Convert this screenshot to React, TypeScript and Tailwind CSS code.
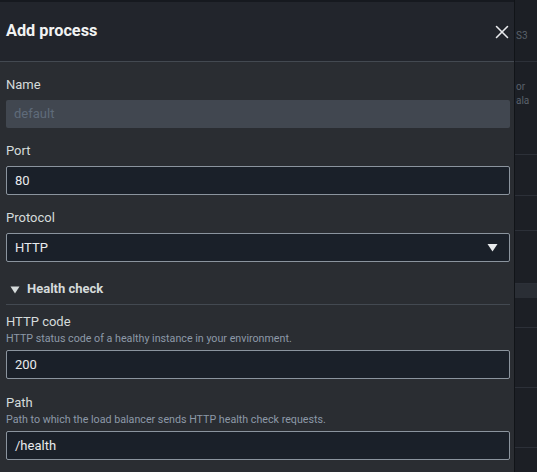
import { X } from "lucide-react";

const font = { fontFamily: "Roboto, 'Noto Sans', sans-serif" };

function Field({
  label,
  description,
  children,
}: {
  label: string;
  description?: string;
  children: React.ReactNode;
}) {
  return (
    <div className="flex flex-col">
      <div className="text-[13px] leading-[18px] text-[#d5dbdb]">{label}</div>
      {description && (
        <div className="text-[10.7px] leading-[16px] text-[#8d99a8]">{description}</div>
      )}
      <div className={description ? "mt-[3px]" : "mt-[6px]"}>{children}</div>
    </div>
  );
}

function TextInput({ value }: { value: string }) {
  return (
    <div className="h-[29px] flex items-center px-[8px] bg-[#1a2029] border border-[#8b949e] rounded-[2px] text-[13px] text-[#e9ebed]">
      {value}
    </div>
  );
}

export default function App() {
  return (
    <div className="w-[537px] h-[472px] bg-[#16191f] flex overflow-hidden" style={font}>
      {/* modal */}
      <div className="w-[514px] mt-[2px] flex flex-col bg-[#2a2d32] shrink-0">
        <div className="h-[60px] flex items-center justify-between pl-[6px] pr-[1px] bg-[#22252c] border-b border-[#434951]">
          <div className="text-[16.3px] font-bold text-[#f2f3f3]">Add process</div>
          <X className="w-[22px] h-[22px] text-[#e9ebed]" strokeWidth={1.7} />
        </div>

        <div className="flex flex-col gap-[14px] px-[6px] pt-[14px] pr-[4px]">
          <Field label="Name">
            <div className="h-[28px] flex items-center px-[8px] bg-[#414750] rounded-[2px] text-[13px] text-[#5f6b7a]">
              default
            </div>
          </Field>

          <Field label="Port">
            <TextInput value="80" />
          </Field>

          <Field label="Protocol">
            <div className="h-[29px] flex items-center justify-between px-[8px] bg-[#1a2029] border border-[#8b949e] rounded-[2px] text-[13px] text-[#e9ebed]">
              <span>HTTP</span>
              <svg width="11" height="9" viewBox="0 0 11 9" className="mr-[3px]">
                <path d="M0.5 1 L10.5 1 L5.5 8.5 Z" fill="#e9ebed" />
              </svg>
            </div>
          </Field>

          <div className="flex flex-col">
            <div className="flex items-center gap-[7px] pl-[4px] h-[26px]">
              <svg width="10" height="8" viewBox="0 0 10 8" className="mt-[1px]">
                <path d="M0.5 0.5 L9.5 0.5 L5 7.5 Z" fill="#d5dbdb" />
              </svg>
              <span className="text-[13px] font-bold text-[#d5dbdb]">Health check</span>
            </div>
            <div className="mt-[2px] border-b border-[#434951]" />
          </div>
        </div>

        <div className="flex flex-col gap-[15px] px-[6px] pr-[4px] pt-[8px]">
          <Field label="HTTP code" description="HTTP status code of a healthy instance in your environment.">
            <TextInput value="200" />
          </Field>
          <Field label="Path" description="Path to which the load balancer sends HTTP health check requests.">
            <TextInput value="/health" />
          </Field>
        </div>
      </div>

      {/* dimmed page behind */}
      <div className="flex-1 flex flex-col bg-[#1c1f25] border-l border-[#111418] text-[10px] text-[#5a616b]">
        <div className="h-[62px] border-b border-[#2c3038] pt-[28px] pl-[1px]">S3</div>
        <div className="h-[93px] border-b border-[#2c3038] pt-[18px] pl-[1px] leading-[14px]">
          <div>or</div>
          <div>ala</div>
        </div>
        <div className="h-[41px] border-b border-[#2c3038]" />
        <div className="h-[35px] border-b border-[#2c3038]" />
        <div className="h-[53px] border-b border-[#2c3038]" />
        <div className="h-[14px] bg-[#2a2e35]" />
        <div className="h-[30px] border-b border-[#2c3038]" />
        <div className="h-[60px] border-b border-[#2c3038]" />
        <div className="h-[60px] border-b border-[#2c3038]" />
      </div>
    </div>
  );
}
